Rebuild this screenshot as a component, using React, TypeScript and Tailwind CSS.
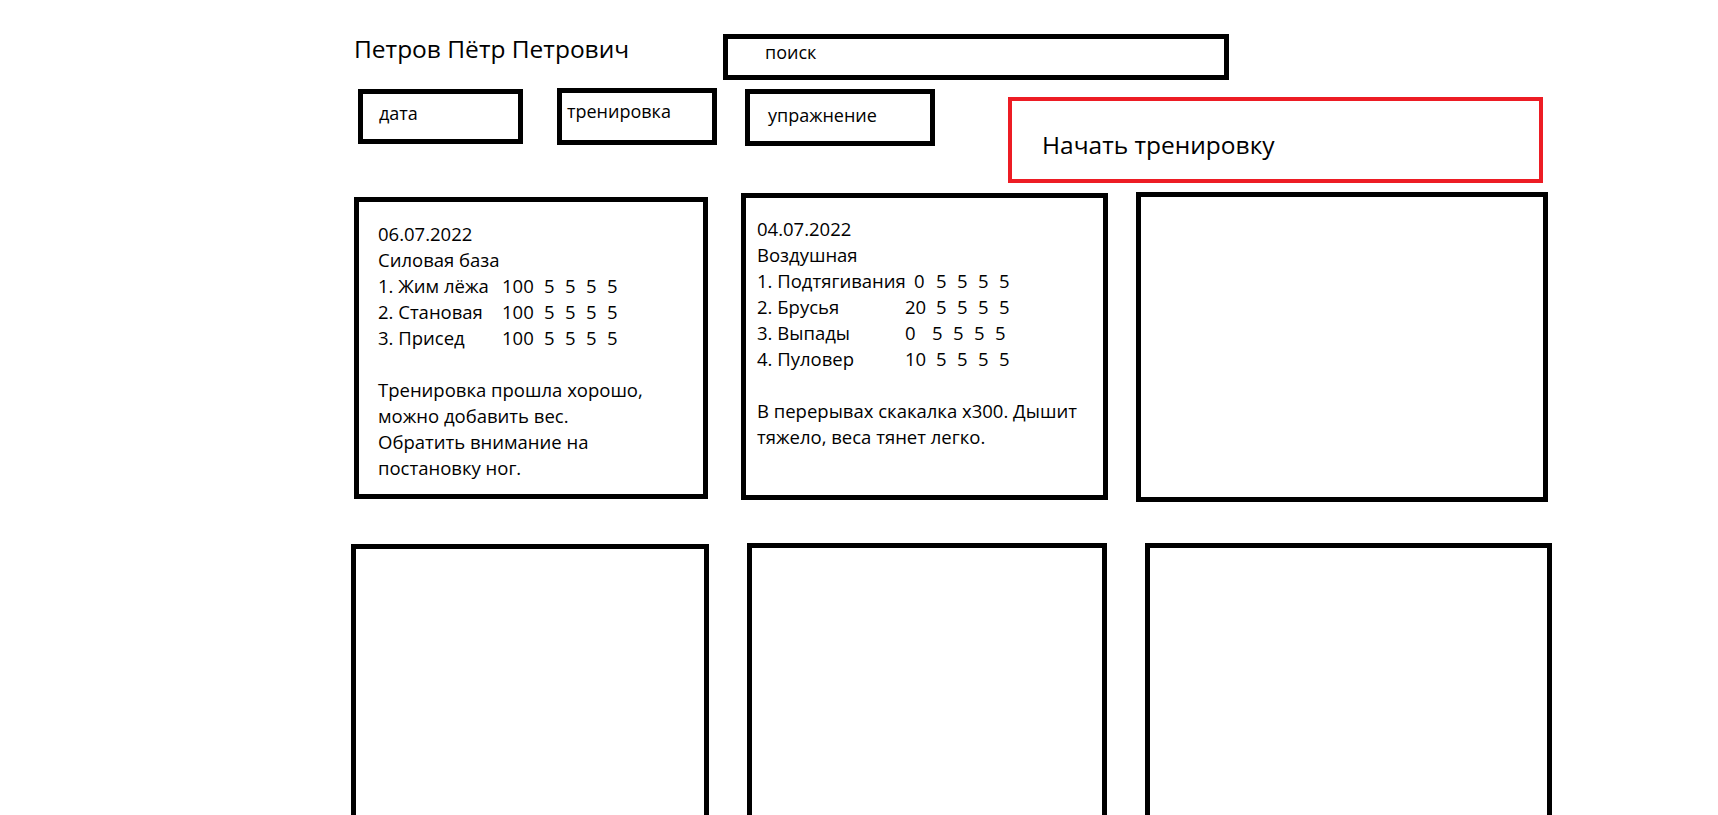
import React from "react";

type Row = { label: string; first: string; fw: string; rest: string[] };

function Card1() {
  const rows = [
    { label: "1. Жим лёжа", first: "100" },
    { label: "2. Становая", first: "100" },
    { label: "3. Присед", first: "100" },
  ];
  return (
    <div className="pl-[19px] pt-[19px] text-[18.5px] leading-[26px] whitespace-nowrap">
      <div>06.07.2022</div>
      <div>Силовая база</div>
      {rows.map((r) => (
        <div key={r.label} className="flex">
          <span className="w-[124px] shrink-0">{r.label}</span>
          <span className="w-[42px] shrink-0">{r.first}</span>
          {["5", "5", "5", "5"].map((v, i) => (
            <span key={i} className="w-[21px] shrink-0">{v}</span>
          ))}
        </div>
      ))}
      <div className="h-[26px]" />
      <div>Тренировка прошла хорошо,</div>
      <div>можно добавить вес.</div>
      <div>Обратить внимание на</div>
      <div>постановку ног.</div>
    </div>
  );
}

function Card2() {
  const rows: Row[] = [
    { label: "2. Брусья", first: "20", fw: "w-[31px]", rest: ["5", "5", "5", "5"] },
    { label: "3. Выпады", first: "0", fw: "w-[27px]", rest: ["5", "5", "5", "5"] },
    { label: "4. Пуловер", first: "10", fw: "w-[31px]", rest: ["5", "5", "5", "5"] },
  ];
  return (
    <div className="pl-[11px] pt-[18px] text-[18.5px] leading-[26px] whitespace-nowrap">
      <div>04.07.2022</div>
      <div>Воздушная</div>
      <div className="flex">
        <span className="w-[157px] shrink-0">1. Подтягивания</span>
        <span className="w-[22px] shrink-0">0</span>
        {["5", "5", "5", "5"].map((v, i) => (
          <span key={i} className="w-[21px] shrink-0">{v}</span>
        ))}
      </div>
      {rows.map((r) => (
        <div key={r.label} className="flex">
          <span className="w-[148px] shrink-0">{r.label}</span>
          <span className={`${r.fw} shrink-0`}>{r.first}</span>
          {r.rest.map((v, i) => (
            <span key={i} className="w-[21px] shrink-0">{v}</span>
          ))}
        </div>
      ))}
      <div className="h-[26px]" />
      <div>В перерывах скакалка х300. Дышит</div>
      <div>тяжело, веса тянет легко.</div>
    </div>
  );
}

export default function App() {
  return (
    <div className="w-full h-[815px] overflow-hidden bg-white text-black font-['Open_Sans',sans-serif] flex flex-col">
      <div className="mt-[34px] flex items-start shrink-0">
        <div className="ml-[354px] w-[369px] shrink-0 text-[24.5px] leading-[30px] whitespace-nowrap">
          Петров Пётр Петрович
        </div>
        <div className="w-[506px] h-[46px] shrink-0 border-[5px] border-black pl-[37px] pt-[2px] text-[18px] leading-[23px]">
          поиск
        </div>
      </div>

      <div className="mt-[8px] flex items-start shrink-0">
        <div className="ml-[358px] mt-[1px] w-[165px] h-[55px] shrink-0 border-[5px] border-black pl-[16px] pt-[8px] text-[18px] leading-[23px]">
          дата
        </div>
        <div className="ml-[34px] w-[160px] h-[57px] shrink-0 border-[5px] border-black pl-[5px] pt-[7px] text-[18px] leading-[23px]">
          тренировка
        </div>
        <div className="ml-[28px] mt-[1px] w-[190px] h-[57px] shrink-0 border-[5px] border-black pl-[18px] pt-[10px] text-[18px] leading-[23px]">
          упражнение
        </div>
        <div className="ml-[73px] mt-[9px] w-[535px] h-[86px] shrink-0 border-4 border-[#ed1c24] pl-[30px] pt-[29px] text-[24.5px] leading-[30px] whitespace-nowrap">
          Начать тренировку
        </div>
      </div>

      <div className="mt-[9px] flex items-start shrink-0">
        <div className="ml-[354px] mt-[5px] w-[354px] h-[302px] shrink-0 border-[5px] border-black">
          <Card1 />
        </div>
        <div className="ml-[33px] mt-[1px] w-[367px] h-[307px] shrink-0 border-[5px] border-black">
          <Card2 />
        </div>
        <div className="ml-[28px] w-[412px] h-[310px] shrink-0 border-[5px] border-black" />
      </div>

      <div className="mt-[41px] flex items-start shrink-0">
        <div className="ml-[351px] mt-[1px] w-[358px] h-[300px] shrink-0 border-[5px] border-black" />
        <div className="ml-[38px] w-[360px] h-[300px] shrink-0 border-[5px] border-black" />
        <div className="ml-[38px] w-[407px] h-[300px] shrink-0 border-[5px] border-black" />
      </div>
    </div>
  );
}
